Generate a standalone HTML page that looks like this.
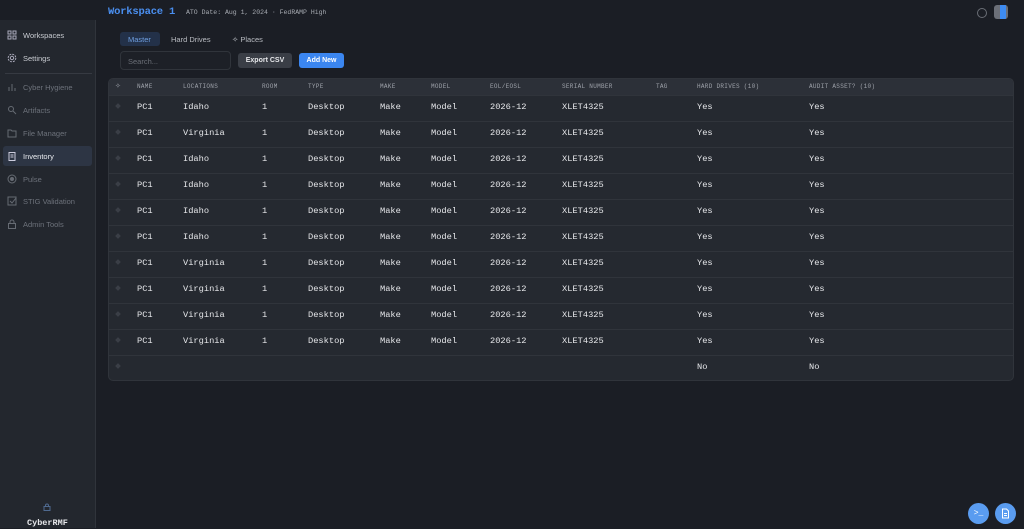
<!DOCTYPE html>
<html><head><meta charset="utf-8"><style>
*{margin:0;padding:0;box-sizing:border-box}
body{width:1024px;height:528px;background:#1b1e25;font-family:"Liberation Sans",sans-serif;position:relative;overflow:hidden;color:#e4e6ea}
.sb{position:absolute;left:0;top:20px;width:96px;height:508px;background:#23272e;border-right:1px solid #30343b}
.it{position:absolute;left:7px;font-size:7.5px;color:#c9ccd2;display:flex;align-items:center;gap:6px;height:12px}
.it.dim{color:#6d727b}
.it svg{width:10px;height:10px;flex:none}
.hl{position:absolute;left:3px;top:126px;width:89px;height:20px;background:#2d3544;border-radius:3px}
.mono{font-family:"Liberation Mono",monospace}
.a{position:absolute}
.tbl{position:absolute;left:108px;top:78px;width:906px;height:303px;background:#252930;border-radius:5px;overflow:hidden;border:1px solid #30343b}
.hd{position:absolute;left:0;top:0;width:100%;height:17px;background:#2c3038}
.c{position:absolute;font-family:"Liberation Mono",monospace;font-size:8.7px;color:#e6e7ea}
.h{position:absolute;font-family:"Liberation Mono",monospace;font-size:6px;color:#9da1a9;letter-spacing:.3px;top:4px}
.row{position:absolute;left:0;width:100%;height:26px;border-top:1px solid #30343b}
.dot{position:absolute;left:7px;top:8px;width:4px;height:4px;background:#3a3e46;transform:rotate(45deg)}
</style></head><body>
<div class="a mono" style="left:108px;top:6px;font-size:10.5px;font-weight:bold;color:#4a8ff0;letter-spacing:-0.2px">Workspace 1</div>
<div class="a mono" style="left:186px;top:9px;font-size:6.5px;color:#a6aab1">ATO Date: Aug 1, 2024 · FedRAMP High</div>
<div class="a" style="left:977px;top:8px;width:10px;height:10px;border:1.2px solid #6a6e76;border-radius:50%"></div>
<div class="a" style="left:994px;top:5px;width:14px;height:14px;border-radius:3px;background:#6b6f78;overflow:hidden"><div style="margin-left:6px;width:6px;height:14px;background:#3e8cf2"></div></div>

<div class="sb">
<div class="it" style="top:9px"><svg viewBox="0 0 10 10" fill="none" stroke="#aab" stroke-width="1"><rect x="1" y="1" width="3" height="3"/><rect x="6" y="1" width="3" height="3"/><rect x="1" y="6" width="3" height="3"/><rect x="6" y="6" width="3" height="3"/></svg>Workspaces</div>
<div class="it" style="top:32px"><svg viewBox="0 0 10 10" fill="none" stroke="#aab" stroke-width="1"><circle cx="5" cy="5" r="1.7"/><circle cx="5" cy="5" r="3.8" stroke-dasharray="2 1"/></svg>Settings</div>
<div class="a" style="left:5px;top:53px;width:87px;height:1px;background:#363a42"></div>
<div class="it dim" style="top:61px"><svg viewBox="0 0 10 10" stroke="#666b73" stroke-width="1"><path d="M2 9V5M5 9V2M8 9V6"/></svg>Cyber Hygiene</div>
<div class="it dim" style="top:84px"><svg viewBox="0 0 10 10" fill="none" stroke="#666b73" stroke-width="1"><circle cx="4" cy="4" r="2.5"/><path d="M6 6l3 3"/></svg>Artifacts</div>
<div class="it dim" style="top:107px"><svg viewBox="0 0 10 10" fill="none" stroke="#666b73" stroke-width="1"><path d="M1 2h3l1 1h4v6H1z"/></svg>File Manager</div>
<div class="hl"></div>
<div class="it" style="top:130px;color:#e8eaee"><svg viewBox="0 0 10 10" fill="none" stroke="#ccd" stroke-width="1"><rect x="2" y="1.5" width="6" height="8"/><path d="M3.5 4h3M3.5 6h3"/></svg>Inventory</div>
<div class="it dim" style="top:153px"><svg viewBox="0 0 10 10" fill="none" stroke="#666b73" stroke-width="1"><circle cx="5" cy="5" r="4"/><circle cx="5" cy="5" r="1.5" fill="#666b73"/></svg>Pulse</div>
<div class="it dim" style="top:175px"><svg viewBox="0 0 10 10" fill="none" stroke="#666b73" stroke-width="1"><rect x="1" y="1" width="8" height="8"/><path d="M3 5l2 2 4-5"/></svg>STIG Validation</div>
<div class="it dim" style="top:198px"><svg viewBox="0 0 10 10" fill="none" stroke="#666b73" stroke-width="1"><rect x="1.5" y="4.5" width="7" height="5"/><path d="M3 4.5V3a2 2 0 014 0v1.5"/></svg>Admin Tools</div>
<svg class="a" style="left:43px;top:483px" width="8" height="8" viewBox="0 0 8 8" fill="none" stroke="#4f6a90" stroke-width="1"><rect x="1" y="3.5" width="6" height="4"/><path d="M2.5 3.5V2.5a1.5 1.5 0 013 0v1"/></svg>
<div class="a mono" style="left:27px;top:498px;font-size:8.5px;font-weight:bold;color:#e6e7ea">CyberRMF</div>
</div>

<div class="a" style="left:120px;top:32px;width:40px;height:14px;background:#233149;border-radius:3px"></div>
<div class="a" style="left:128px;top:35px;font-size:7.5px;color:#6e9ee0">Master</div>
<div class="a" style="left:171px;top:35px;font-size:7.5px;color:#b9bcc2">Hard Drives</div>
<div class="a" style="left:232px;top:35px;font-size:7.5px;color:#b9bcc2">✧ Places</div>
<div class="a" style="left:120px;top:51px;width:111px;height:19px;border:1px solid #30343b;border-radius:4px;background:#1d2027;font-size:7.5px;color:#6a6e76;padding:5px 7px">Search...</div>
<div class="a" style="left:238px;top:53px;width:54px;height:15px;background:#3a3e46;border-radius:3px;font-size:7px;font-weight:bold;color:#e6e7ea;text-align:center;line-height:15px">Export CSV</div>
<div class="a" style="left:299px;top:53px;width:45px;height:15px;background:#3b86f0;border-radius:3px;font-size:7px;font-weight:bold;color:#fff;text-align:center;line-height:15px">Add New</div>

<div class="tbl" id="t">
<div class="hd"></div>
<div class="h" style="left:6px;top:3px;font-size:7px">✧</div>
<div class="h" style="left:28px">NAME</div><div class="h" style="left:74px">LOCATIONS</div><div class="h" style="left:153px">ROOM</div><div class="h" style="left:199px">TYPE</div><div class="h" style="left:271px">MAKE</div><div class="h" style="left:322px">MODEL</div><div class="h" style="left:381px">EOL/EOSL</div><div class="h" style="left:453px">SERIAL NUMBER</div><div class="h" style="left:547px">TAG</div><div class="h" style="left:588px">HARD DRIVES (10)</div><div class="h" style="left:700px">AUDIT ASSET? (10)</div>
</div>
<script>
var locs=["Idaho","Virginia","Idaho","Idaho","Idaho","Idaho","Virginia","Virginia","Virginia","Virginia"];
var t=document.getElementById('t'),h='';
for(var i=0;i<11;i++){var y=16+i*26;h+='<div class="row" style="top:'+y+'px"><div class="dot"></div>';
var tp='top:6px;';
if(i<10){var v=[[28,'PC1'],[74,locs[i]],[153,'1'],[199,'Desktop'],[271,'Make'],[322,'Model'],[381,'2026-12'],[453,'XLET4325'],[588,'Yes'],[700,'Yes']];}
else{var v=[[588,'No'],[700,'No']];}
v.forEach(function(a){h+='<div class="c" style="'+tp+'left:'+a[0]+'px">'+a[1]+'</div>'});h+='</div>';}
t.insertAdjacentHTML('beforeend',h);
</script>
<div class="a" style="left:968px;top:503px;width:21px;height:21px;border-radius:50%;background:#5a9cf0;color:#fff;font-size:8px;font-family:'Liberation Mono',monospace;text-align:center;line-height:21px">&gt;_</div>
<div class="a" style="left:995px;top:503px;width:21px;height:21px;border-radius:50%;background:#5a9cf0"><svg width="21" height="21" viewBox="0 0 21 21" fill="none" stroke="#fff" stroke-width="1"><path d="M7.5 6h4l2 2v7h-6z"/><path d="M9 10.5h3M9 12.5h3"/></svg></div>
</body></html>
